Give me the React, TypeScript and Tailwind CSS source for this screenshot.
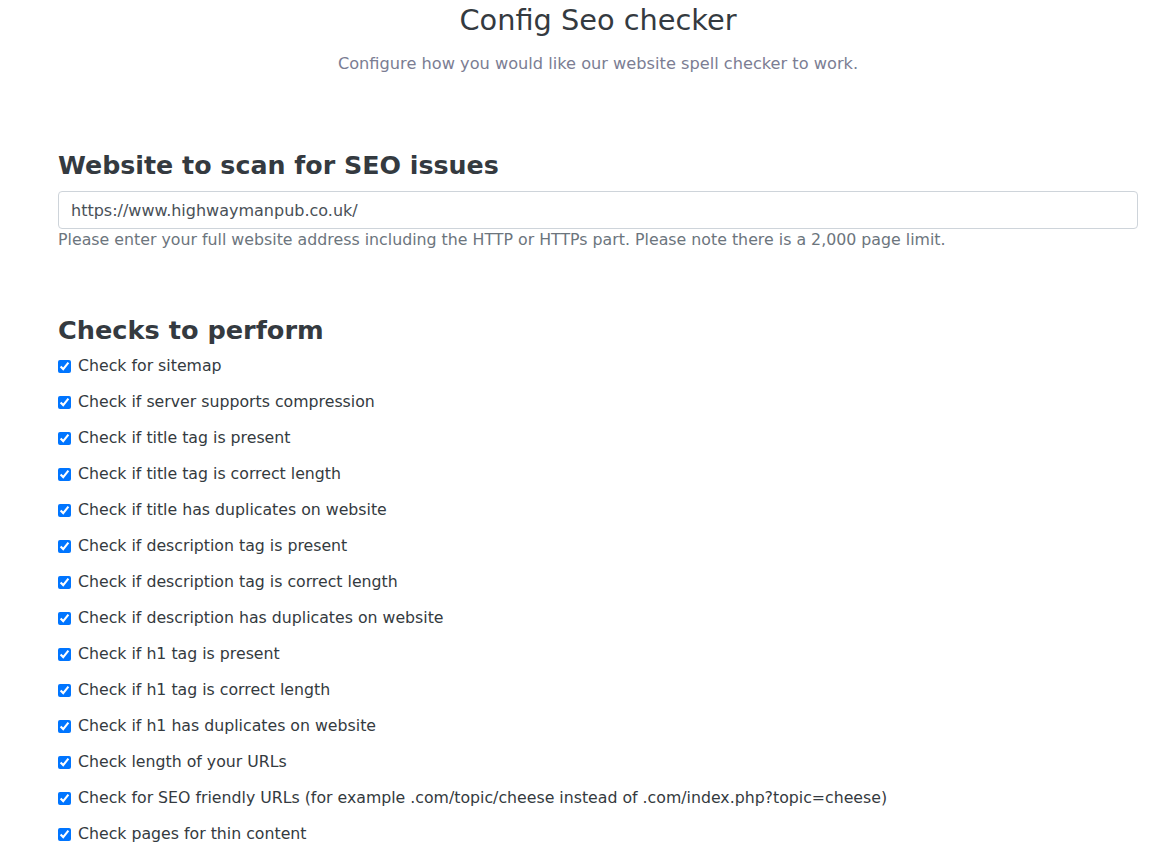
import React from 'react';

const checks = [
    'Check for sitemap',
    'Check if server supports compression',
    'Check if title tag is present',
    'Check if title tag is correct length',
    'Check if title has duplicates on website',
    'Check if description tag is present',
    'Check if description tag is correct length',
    'Check if description has duplicates on website',
    'Check if h1 tag is present',
    'Check if h1 tag is correct length',
    'Check if h1 has duplicates on website',
    'Check length of your URLs',
    'Check for SEO friendly URLs (for example .com/topic/cheese instead of .com/index.php?topic=cheese)',
    'Check pages for thin content',
];

export default function App() {
    return (
        <div className="min-h-screen bg-white pl-[58px] pr-[31px] text-[#343a40] font-['DejaVu_Sans',sans-serif]">
            <h1 className="pt-[3px] text-center text-[28.8px] font-normal leading-[34px]">Config Seo checker</h1>
            <p className="mt-[16px] text-center text-[16.2px] leading-[22px] text-[#7b7d93]">
                Configure how you would like our website spell checker to work.
            </p>

            <h2 className="mt-[74px] text-[25.3px] font-bold leading-[34px]">Website to scan for SEO issues</h2>
            <input
                type="text"
                defaultValue="https://www.highwaymanpub.co.uk/"
                className="mt-[8px] block h-[38px] w-full rounded border border-[#ced4da] px-3 text-[16px] text-[#495057] outline-none"
            />
            <p className="mt-0 text-[15.8px] leading-[22px] text-[#6c757d]">
                Please enter your full website address including the HTTP or HTTPs part. Please note there is a 2,000 page limit.
            </p>

            <h2 className="mt-[62px] text-[25.6px] font-bold leading-[34px]">Checks to perform</h2>
            <div className="mt-[8px] flex flex-col gap-[14px]">
                {checks.map((c) => (
                    <label key={c} className="flex h-[22px] items-center gap-[7px] text-[15.75px] text-[#343a40]">
                        <input type="checkbox" defaultChecked className="m-0 h-[13px] w-[13px]" />
                        <span>{c}</span>
                    </label>
                ))}
            </div>
        </div>
    );
}
